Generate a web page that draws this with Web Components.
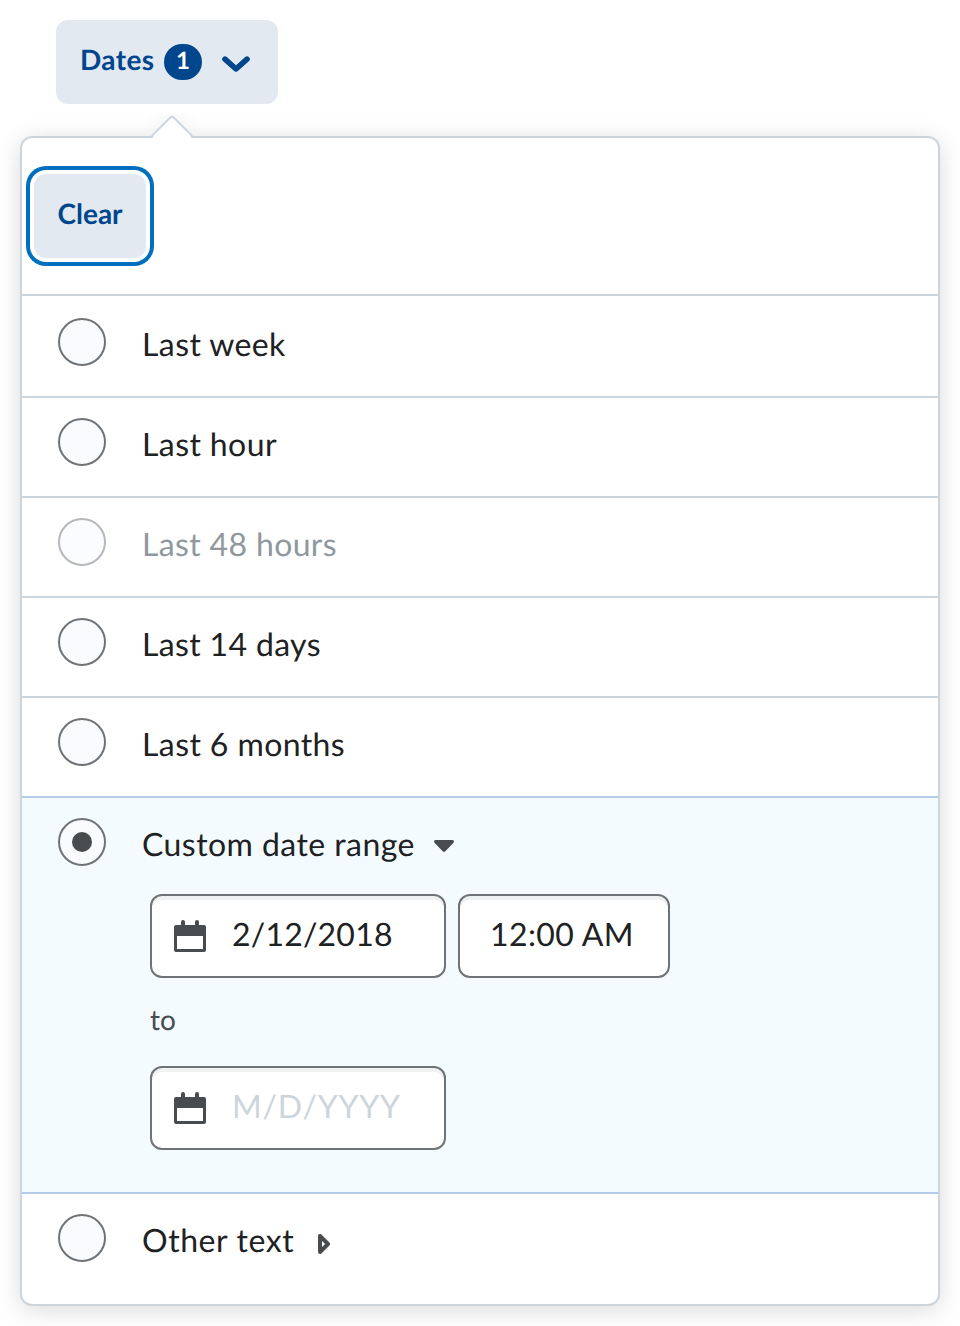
<!DOCTYPE html>
<html lang="en">
<head>
<meta charset="utf-8">
<title>Dates filter</title>
<style>
html,body{margin:0;background:#fff}
body{font-family:Lato,"Liberation Sans",sans-serif;color:#202122;height:1326px;overflow:hidden;text-rendering:geometricPrecision}
</style>
</head>
<body>
<date-filter></date-filter>
<script>
function define(name, html){
  const template = document.createElement('template');
  template.innerHTML = html;
  customElements.define(name, class extends HTMLElement{
    constructor(){
      super();
      this.attachShadow({mode:'open'}).append(template.content.cloneNode(true));
    }
  });
}

define('filter-opener', `<style>
:host{display:flex;box-sizing:border-box;width:222px;height:84px;padding-left:24px;align-items:center;border-radius:12px;background:#e3e9f1;color:#00468c;font-size:28px;font-weight:700;line-height:34px}
.label{margin-top:-6px;width:74px;white-space:nowrap;letter-spacing:.4px}
.count{margin-left:10px;width:38px;height:36px;border-radius:18px;background:#00468c;color:#fff;font-size:24px;line-height:34px;text-align:center}
svg{margin:4px 0 0 20px;display:block}
</style><span class="label"><slot></slot></span><span class="count"><slot name="count"></slot></span>
<svg width="28" height="17" viewBox="0 0 28 17"><path d="M3 3.2 14 13 25 3.2" fill="none" stroke="#00468c" stroke-width="5.6" stroke-linecap="round" stroke-linejoin="round"/></svg>`);

define('clear-button', `<style>
:host{display:block;box-sizing:border-box;width:112px;height:84px;border-radius:12px;background:#e3e9f1;box-shadow:0 0 0 4px #fff,0 0 0 8px #006fbf;color:#00468c;font-size:28px;font-weight:700;line-height:78px;text-align:center}
</style><slot></slot>`);

define('filter-option', `<style>
:host{display:grid;box-sizing:border-box;grid-template-columns:48px 1fr;column-gap:36px;align-content:start;height:100px;padding:20px 36px 0;border-top:2px solid #cdd5dc;font-size:32px;line-height:48px}
:host([first]){height:102px;padding-top:22px}
:host([last]){height:112px}
:host([selected]){height:396px;background:#f3fbff;border-color:#b4cbea}
:host([after]){border-color:#b4cbea}
.radio{box-sizing:border-box;width:48px;height:48px;border:2px solid #6e7376;border-radius:50%;background:#f9fbff;display:grid;place-items:center}
:host([selected]) .radio::after{content:"";width:20px;height:20px;border-radius:50%;background:#494c4e}
:host([disabled]) .radio{opacity:.5}
:host([disabled]) .label{color:#90989d}
.label{padding-top:2px;height:48px;display:flex;white-space:nowrap;letter-spacing:var(--track,.4px)}
.body{grid-column:2}
</style><span class="radio"></span><div class="label"><slot></slot><slot name="mark"></slot></div><div class="body"><slot name="body"></slot></div>`);

define('open-arrow', `<style>:host{display:block;margin:20px 0 0 19px}svg{display:block}</style>
<svg width="20" height="12" viewBox="0 0 20 12"><path d="M1.7 0H18.3Q19.7 0 20 1.4 20 2.3 19.3 3L11.3 11.3Q10 12.6 8.7 11.3L.7 3Q0 2.3 0 1.4.3 0 1.7 0Z" fill="#494c4e"/></svg>`);

define('closed-arrow', `<style>:host{display:block;margin:18px 0 0 24px}svg{display:block}</style>
<svg width="12" height="20" viewBox="0 0 12 20"><path d="M2 2V18L10 10Z" fill="none" stroke="#494c4e" stroke-width="4" stroke-linejoin="round"/></svg>`);

define('input-box', `<style>
:host{display:flex;box-sizing:border-box;width:296px;height:84px;border:2px solid #6e7376;border-radius:12px;background:#fff;box-shadow:inset 0 4px 0 #f0f1f2;padding-left:22px;align-items:center;font-size:32px;line-height:48px;letter-spacing:.2px;white-space:nowrap}
:host([time]){width:212px;padding-left:30px;letter-spacing:.38px}
:host([time]) svg{display:none}
:host([placeholder]){letter-spacing:.76px}
:host([placeholder]) span{color:#cdd5dc}
svg{display:block;margin:0 26px 0 0}
span{margin-top:-4px}
</style><svg width="32" height="32" viewBox="0 0 32 32"><path fill="#494c4e" fill-rule="evenodd" d="M7 5V2Q7 0 9 0T11 2V5H21V2Q21 0 23 0T25 2V5H30Q32 5 32 7V30Q32 32 30 32H2Q0 32 0 30V7Q0 5 2 5ZM3 16V29H29V16Z"/></svg><span><slot></slot></span>`);

define('date-range', `<style>
:host{display:flex;flex-direction:column;gap:0;padding:26px 0 0 8px}
.row{display:flex;gap:12px}
.to{height:88px;box-sizing:border-box;padding-top:24px;font-size:28px;line-height:34px;color:#494c4e;letter-spacing:.1px}
</style><div class="row"><slot name="start"></slot></div><div class="to"><slot></slot></div><div class="row"><slot name="end"></slot></div>`);

define('filter-panel', `<style>
:host{display:block;position:relative;box-sizing:border-box;width:920px;height:1170px;border:2px solid #cdd5dc;border-radius:12px;background:#fff;box-shadow:0 4px 24px rgba(0,0,0,.15)}
.pointer{position:absolute;left:118px;top:-24px;width:64px;height:24px;overflow:hidden}
.pointer::before{content:"";position:absolute;box-sizing:border-box;left:16px;top:7px;width:32px;height:32px;transform:rotate(45deg);border:2px solid #cdd5dc;border-radius:4px;background:#fff;box-shadow:-8px -8px 24px -10px rgba(32,33,34,.2)}
.head{box-sizing:border-box;height:156px;padding:36px 0 0 12px}
</style><div class="pointer"></div><div class="head"><slot name="head"></slot></div><slot></slot>`);

define('date-filter', `<style>
:host{display:flex;flex-direction:column;align-items:flex-start;gap:32px;padding:20px}
filter-opener{margin-left:36px}
.wide{--track:.44px}
.wider{--track:.58px}
.tight{--track:.35px}
</style>
<filter-opener>Dates<span slot="count">1</span></filter-opener>
<filter-panel>
<clear-button slot="head">Clear</clear-button>
<filter-option first>Last week</filter-option>
<filter-option>Last hour</filter-option>
<filter-option disabled class="tight">Last 48 hours</filter-option>
<filter-option class="tight">Last 14 days</filter-option>
<filter-option>Last 6 months</filter-option>
<filter-option selected class="wide">Custom date range<open-arrow slot="mark"></open-arrow>
<date-range slot="body"><input-box slot="start">2/12/2018</input-box><input-box slot="start" time>12:00 AM</input-box>to<input-box slot="end" placeholder>M/D/YYYY</input-box></date-range></filter-option>
<filter-option last after class="wider">Other text<closed-arrow slot="mark"></closed-arrow></filter-option>
</filter-panel>`);
</script>
</body>
</html>
